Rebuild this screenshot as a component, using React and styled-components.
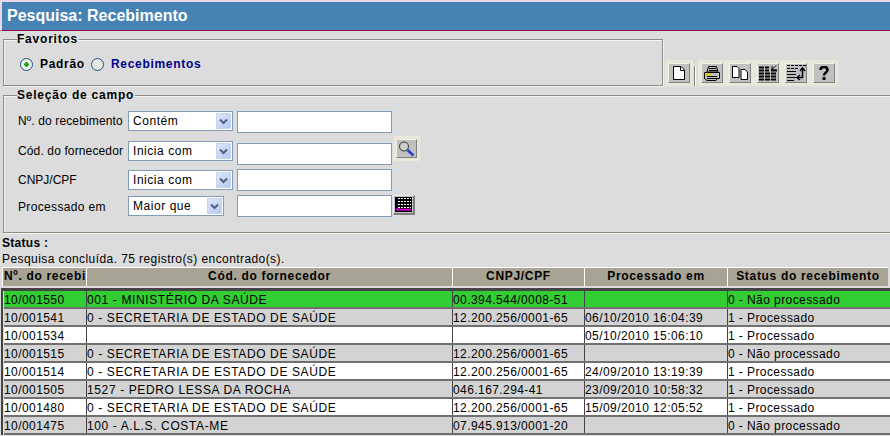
import styled, { createGlobalStyle } from "styled-components";

const Global = createGlobalStyle`
html, body {
  margin: 0;
  padding: 0;
  background: #dcdcdc;
  overflow: hidden;
}
* { box-sizing: border-box; }
`;

const Pagina = styled.div`
width: 890px;
height: 436px;
overflow: hidden;
background: #dcdcdc;
font-family: "Liberation Sans", Arial, sans-serif;
font-size: 12px;
color: #000;
`;

const Titulo = styled.div`
height: 31px;
background: #4682b4;
border-top: 2px solid #e8d8e8;
border-left: 2px solid #e8d8e8;
border-bottom: 1px solid #8b0a50;
color: #fff;
font-size: 16px;
font-weight: bold;
line-height: 28px;
padding-left: 5px;
`;

const LinhaFavoritos = styled.div`
display: flex;
align-items: flex-start;
margin-top: 1px;
height: 54px;
padding-left: 3px;
`;

const LinhaSelecao = styled.div`
margin-top: 2px;
padding-left: 3px;
`;

const Grupo = styled.fieldset`
flex-shrink: 0;
margin: 0;
padding: 0 0 0 13px;
border: 1px solid #8c8c80;
box-shadow: inset 1px 1px 0 #f4f4f0, 1px 1px 0 #f4f4f0;
width: ${(p) => p.$largura}px;
height: ${(p) => p.$altura}px;
`;

const Legenda = styled.legend`
padding: 1px 1px 0 0;
font-size: 12px;
font-weight: bold;
letter-spacing: 0.78px;
line-height: 13px;
`;

const Radios = styled.div`
display: flex;
align-items: center;
height: 20px;
margin-top: 8px;
padding-left: 3px;
font-weight: bold;
letter-spacing: 0.7px;
`;

const Radio = styled.span`
width: 13px;
height: 13px;
border-radius: 50%;
border: 1px solid #1c5180;
background: ${(p) => (p.$marcado ? "radial-gradient(circle, #21a121 0 2px, #eeeee8 2.5px)" : "#e8e8e2")};
margin-right: 7px;
`;

const RadioTexto = styled.span`
color: ${(p) => p.$cor || "#000"};
margin-right: ${(p) => p.$margem || 0}px;
`;

const BarraFerramentas = styled.div`
display: flex;
align-items: flex-start;
margin: 31px 0 0 5px;
`;

const BotaoIcone = styled.button`
width: 22px;
height: 20px;
margin: 0 6px 0 0;
padding: 0;
display: flex;
align-items: center;
justify-content: center;
background: #c0c0c0;
border: 1px solid;
border-color: #f0f0e4 #808080 #808080 #f0f0e4;
box-shadow: 0 0 0 3px #e8e8da;
`;

const BotaoFolha = styled(BotaoIcone)`
margin-right: 4px;
`;

const Separador = styled.span`
width: 1px;
height: 20px;
margin: 3px 6px 0 0;
background: #808080;
box-shadow: 1px 0 0 #fff;
`;

const FormLinhas = styled.div`
display: grid;
grid-template-columns: 111px 109px auto;
grid-template-rows: 30px 28px 26px 26px;
margin-top: 9px;
`;

const Rotulo = styled.label`
display: block;
margin-top: ${(p) => p.$topo || 0}px;
padding-left: 1px;
line-height: 20px;
letter-spacing: ${(p) => p.$espaco}px;
white-space: nowrap;
`;

const Seletor = styled.div`
width: ${(p) => p.$largura || 105}px;
height: 20px;
margin-top: ${(p) => p.$topo || 0}px;
display: flex;
align-items: center;
justify-content: space-between;
padding: 0 1px 0 4px;
background: #fff;
border: 1px solid #7f9db9;
letter-spacing: 0.55px;
`;

const SetaSeletor = styled.span`
width: 15px;
height: 16px;
display: flex;
align-items: center;
justify-content: center;
background: linear-gradient(135deg, #dfe8fa, #b4c8f0);
border: 1px solid #c6d4ee;
`;

const CelulaEntrada = styled.div`
display: flex;
align-items: flex-start;
`;

const Entrada = styled.input`
width: 155px;
height: 22px;
margin: ${(p) => p.$topo || 0}px 0 0;
padding: 0 3px;
border: 1px solid #7f9db9;
background: #fff;
`;

const BotaoBusca = styled(BotaoIcone)`
width: 21px;
height: 19px;
margin: -2px 0 0 4px;
`;

const BotaoCalendario = styled.button`
width: 22px;
height: 20px;
margin: 0 0 0 1px;
padding: 0 1px 1px 0;
display: flex;
align-items: center;
justify-content: center;
background: #c0c0c0;
border: 1px solid;
border-color: #f0f0f0 #808080 #808080 #f0f0f0;
border-right-width: 2px;
border-bottom-width: 2px;
`;

const Status = styled.div`
margin-top: 4px;
padding-left: 2px;
line-height: 13px;
`;

const StatusTitulo = styled.div`
font-weight: bold;
letter-spacing: 0.3px;
`;

const StatusTexto = styled.div`
margin-top: 3px;
letter-spacing: 0.42px;
`;

const Cabecalho = styled.div`
display: grid;
grid-template-columns: 84px 366px 132px 143px 161px;
margin: 1px 0 0 2px;
height: 19px;
`;

const CelulaCabecalho = styled.div`
background: #a8a494;
border-left: 1px solid #fff;
border-top: 1px solid #fff;
font-weight: bold;
letter-spacing: 0.68px;
line-height: 17px;
white-space: nowrap;
text-align: ${(p) => (p.$esquerda ? "left" : "center")};
padding-left: ${(p) => (p.$esquerda ? 1 : 0)}px;
`;

const Tabela = styled.div`
margin: 2px 0 0 1px;
border-top: 3px solid #444;
border-left: 2px solid #444;
padding-left: 1px;
`;

const Linha = styled.div`
display: grid;
grid-template-columns: 82px 366px 132px 143px 163px;
height: 18px;
background: ${(p) => p.$fundo};
border-bottom: 2px solid #707070;
`;

const Celula = styled.div`
border-left: ${(p) => (p.$primeira ? "0" : "1px solid #444")};
line-height: 18px;
letter-spacing: ${(p) => (p.$caixaAlta ? 0.62 : 0.42)}px;
white-space: nowrap;
overflow: hidden;
`;

const IconeFolha = () => (
  <svg width="12" height="14" viewBox="0 0 12 14">
    <path d="M.5 .5H8L11.500 4V13.500H.5Z" fill="#fff" stroke="#000" />
    <path d="M7.500 .5V4.500H11.500" fill="none" stroke="#000" />
  </svg>
);

const IconeImpressora = () => (
  <svg width="16" height="15" viewBox="0 0 16 15">
    <path d="M4.500 .5H12.500L14 6H3Z" fill="#c0c0c0" stroke="#000" />
    <path d="M.5 6.500H15.500V12.500H13L12 14.500H3L.5 12.500Z" fill="#c0c0c0" stroke="#000" />
    <path d="M5 2.500H12M5 4.500H13M3 12.500H13M3 10.500H13" stroke="#000" />
    <path d="M2 8.500H8" stroke="#e6c800" strokeWidth="2" />
  </svg>
);

const IconeCopiar = () => (
  <svg width="16" height="14" viewBox="0 0 16 14">
    <path d="M.5 .5H5L7 2.500V11.500H.5Z" fill="#fff" stroke="#000" />
    <path d="M9 3.500H13L15.500 6V13.500H9Z" fill="#fff" stroke="#000" />
  </svg>
);

const IconeColunas = () => (
  <svg width="18" height="17" viewBox="0 0 18 17">
    <path d="M0 2.500H10M0 5.500H10M0 8.500H18M0 11.500H18M0 14.500H18" stroke="#000" strokeWidth="2" strokeDasharray="5 1" />
    <path d="M12 5.500H18" stroke="#000" strokeWidth="2" />
    <path d="M17 .5L13 4.500M13 1V5H17" fill="none" stroke="#000" />
  </svg>
);

const IconeOrdenar = () => (
  <svg width="19" height="16" viewBox="0 0 19 16">
    <path d="M0 .5H19M0 3.500H11" stroke="#000" strokeDasharray="3 1" />
    <path d="M0 6.500H9M0 9.500H9M0 12.500H9M0 15.500H7" stroke="#000" />
    <path d="M15.500 4V12.500H11" fill="none" stroke="#000" strokeWidth="1.500" />
    <path d="M13 6L15.500 3L18 6M13 10L10 12.500L13 15" fill="none" stroke="#000" strokeWidth="1.500" />
  </svg>
);

const IconeAjuda = () => (
  <svg width="10" height="14" viewBox="0 0 10 14">
    <path d="M1.500 4C1.500 0 8.500 0 8.500 4C8.500 6.500 5 6.500 5 9.500" fill="none" stroke="#000" strokeWidth="2.500" />
    <rect x="3.500" y="11" width="3" height="3" fill="#000" />
  </svg>
);

const IconeLupa = () => (
  <svg width="18" height="16" viewBox="0 0 18 16">
    <circle cx="6" cy="5.500" r="4.500" fill="#cfcfcf" stroke="#303030" />
    <path d="M9.500 9L15.500 14.500" stroke="#1f3fd0" strokeWidth="2.500" />
  </svg>
);

const IconeCalendario = () => (
  <svg width="17" height="15" viewBox="0 0 17 15">
    <rect width="17" height="15" fill="#000" />
    <path d="M3 1.500H16M3 4.500H16M3 7.500H16" stroke="#fff" />
    <path d="M1 1.500H2M1 4.500H2M1 7.500H2M1 10.500H2" stroke="#00006e" />
    <path d="M1 12.500H16" stroke="#e000e0" strokeWidth="2" />
    <path d="M3 10.500H16" stroke="#fff" />
    <path d="M5.500 0V12M8.500 0V12M11.500 0V12M14.500 0V12" stroke="#000" />
  </svg>
);

const SetaBaixo = () => (
  <svg width="9" height="7" viewBox="0 0 9 7">
    <path d="M1 1.500L4.500 5L8 1.500" fill="none" stroke="#4d6185" strokeWidth="2" />
  </svg>
);

const CampoSeletor = ({ texto, largura, topo }) => (
  <Seletor $largura={largura} $topo={topo}>
    {texto}
    <SetaSeletor>
      <SetaBaixo />
    </SetaSeletor>
  </Seletor>
);

const registros = [
  ["10/001550", "001 - MINISTÉRIO DA SAÚDE", "00.394.544/0008-51", "", "0 - Não processado", "#32cd32"],
  ["10/001541", "0 - SECRETARIA DE ESTADO DE SAÚDE", "12.200.256/0001-65", "06/10/2010 16:04:39", "1 - Processado", "#d3d3d3"],
  ["10/001534", "", "", "05/10/2010 15:06:10", "1 - Processado", "#fff"],
  ["10/001515", "0 - SECRETARIA DE ESTADO DE SAÚDE", "12.200.256/0001-65", "", "0 - Não processado", "#d3d3d3"],
  ["10/001514", "0 - SECRETARIA DE ESTADO DE SAÚDE", "12.200.256/0001-65", "24/09/2010 13:19:39", "1 - Processado", "#fff"],
  ["10/001505", "1527 - PEDRO LESSA DA ROCHA", "046.167.294-41", "23/09/2010 10:58:32", "1 - Processado", "#d3d3d3"],
  ["10/001480", "0 - SECRETARIA DE ESTADO DE SAÚDE", "12.200.256/0001-65", "15/09/2010 12:05:52", "1 - Processado", "#fff"],
  ["10/001475", "100 - A.L.S. COSTA-ME", "07.945.913/0001-20", "", "0 - Não processado", "#d3d3d3"],
];

const App = () => (
  <Pagina>
    <Global />
    <Titulo>Pesquisa: Recebimento</Titulo>

    <LinhaFavoritos>
      <Grupo $largura={660} $altura={54}>
        <Legenda>Favoritos</Legenda>
        <Radios>
          <Radio $marcado />
          <RadioTexto $margem={6}>Padrão</RadioTexto>
          <Radio />
          <RadioTexto $cor="#00008b">Recebimentos</RadioTexto>
        </Radios>
      </Grupo>
      <BarraFerramentas>
        <BotaoFolha><IconeFolha /></BotaoFolha>
        <Separador />
        <BotaoIcone><IconeImpressora /></BotaoIcone>
        <BotaoIcone><IconeCopiar /></BotaoIcone>
        <BotaoIcone><IconeColunas /></BotaoIcone>
        <BotaoIcone><IconeOrdenar /></BotaoIcone>
        <BotaoIcone><IconeAjuda /></BotaoIcone>
      </BarraFerramentas>
    </LinhaFavoritos>

    <LinhaSelecao>
      <Grupo $largura={890} $altura={145}>
        <Legenda>Seleção de campo</Legenda>
        <FormLinhas>
          <Rotulo $espaco={0.13}>Nº. do recebimento</Rotulo>
          <CampoSeletor texto="Contém" />
          <CelulaEntrada><Entrada /></CelulaEntrada>

          <Rotulo $espaco={0.13}>Cód. do fornecedor</Rotulo>
          <CampoSeletor texto="Inicia com" />
          <CelulaEntrada>
            <Entrada $topo={2} />
            <BotaoBusca><IconeLupa /></BotaoBusca>
          </CelulaEntrada>

          <Rotulo $topo={1} $espaco={0}>CNPJ/CPF</Rotulo>
          <CampoSeletor texto="Inicia com" topo={1} />
          <CelulaEntrada><Entrada /></CelulaEntrada>

          <Rotulo $topo={2} $espaco={0.35}>Processado em</Rotulo>
          <CampoSeletor texto="Maior que" largura={96} topo={1} />
          <CelulaEntrada>
            <Entrada />
            <BotaoCalendario><IconeCalendario /></BotaoCalendario>
          </CelulaEntrada>
        </FormLinhas>
      </Grupo>
    </LinhaSelecao>

    <Status>
      <StatusTitulo>Status :</StatusTitulo>
      <StatusTexto>Pesquisa concluída. 75 registro(s) encontrado(s).</StatusTexto>
    </Status>

    <Cabecalho>
      <CelulaCabecalho $esquerda>Nº. do recebi</CelulaCabecalho>
      <CelulaCabecalho>Cód. do fornecedor</CelulaCabecalho>
      <CelulaCabecalho>CNPJ/CPF</CelulaCabecalho>
      <CelulaCabecalho>Processado em</CelulaCabecalho>
      <CelulaCabecalho>Status do recebimento</CelulaCabecalho>
    </Cabecalho>

    <Tabela>
      {registros.map((r) => (
        <Linha key={r[0]} $fundo={r[5]}>
          <Celula $primeira>{r[0]}</Celula>
          <Celula $caixaAlta>{r[1]}</Celula>
          <Celula>{r[2]}</Celula>
          <Celula>{r[3]}</Celula>
          <Celula>{r[4]}</Celula>
        </Linha>
      ))}
    </Tabela>
  </Pagina>
);

export default App;
